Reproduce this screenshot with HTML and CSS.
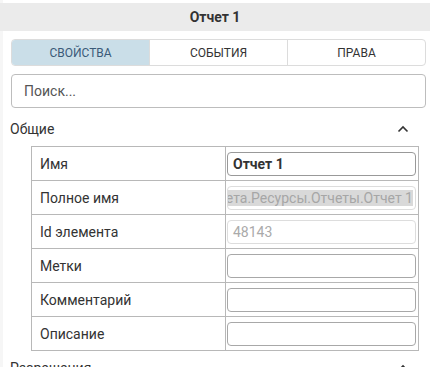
FILE: index.html
```html
<!DOCTYPE html>
<html lang="ru">
<head>
<meta charset="utf-8">
<link rel="stylesheet" href="styles.css">
</head>
<body>
<div class="page">
  <div class="header">Отчет 1</div>
  <div class="content">
    <div class="tabs">
      <div class="tab active">СВОЙСТВА</div>
      <div class="tab">СОБЫТИЯ</div>
      <div class="tab">ПРАВА</div>
    </div>
    <div class="search">Поиск...</div>
    <div class="section-head">
      <span>Общие</span>
      <svg class="chev" width="12" height="8" viewBox="0 0 12 8"><path d="M1.5 6.5 L6 2 L10.5 6.5" fill="none" stroke="#333" stroke-width="1.6"/></svg>
    </div>
    <div class="table">
      <div class="row">
        <div class="label">Имя</div>
        <div class="cell"><div class="input strong">Отчет 1</div></div>
      </div>
      <div class="row">
        <div class="label">Полное имя</div>
        <div class="cell"><div class="input disabled end"><span class="sel">Мета.Ресурсы.Отчеты.Отчет 1</span></div></div>
      </div>
      <div class="row">
        <div class="label">Id элемента</div>
        <div class="cell"><div class="input disabled">48143</div></div>
      </div>
      <div class="row">
        <div class="label">Метки</div>
        <div class="cell"><div class="input"></div></div>
      </div>
      <div class="row">
        <div class="label">Комментарий</div>
        <div class="cell"><div class="input"></div></div>
      </div>
      <div class="row">
        <div class="label">Описание</div>
        <div class="cell"><div class="input"></div></div>
      </div>
    </div>
    <div class="section-head next">
      <span>Разрешения</span>
      <svg class="chev" width="12" height="8" viewBox="0 0 12 8"><path d="M1.5 6.5 L6 2 L10.5 6.5" fill="none" stroke="#333" stroke-width="1.6"/></svg>
    </div>
  </div>
</div>
</body>
</html>
```

FILE: styles.css
```css
html, body {
  margin: 0;
  padding: 0;
  background: #fff;
}
body {
  font-family: Roboto, "Liberation Sans", sans-serif;
  color: #333;
  overflow: hidden;
  height: 367px;
}
.page {
  padding-top: 3px;
  border-left: 3px solid #f6f6f6;
  min-height: 364px;
}
.header {
  height: 28px;
  background: #ebebeb;
  display: flex;
  align-items: center;
  justify-content: center;
  font-weight: 700;
  font-size: 14px;
  color: #333;
  margin-left: -3px;
}
.content {
  padding: 8px 4px 0 8px;
}
.tabs {
  display: flex;
  height: 25px;
  border: 1px solid #dcdcdc;
  border-radius: 4px;
  overflow: hidden;
}
.tab {
  flex: 1;
  display: flex;
  align-items: center;
  justify-content: center;
  font-size: 12px;
  color: #333;
  border-left: 1px solid #dcdcdc;
}
.tab:first-child { border-left: none; }
.tab.active {
  background: #cadee8;
  color: #3b5a78;
}
.search {
  margin-top: 8px;
  height: 32px;
  border: 1px solid #bdbdbd;
  border-radius: 4px;
  display: flex;
  align-items: center;
  padding-left: 12px;
  font-size: 14px;
  color: #555;
}
.section-head {
  display: flex;
  justify-content: space-between;
  align-items: center;
  height: 26px;
  margin-top: 8px;
  margin-left: -1px;
  padding-right: 17px;
  font-size: 14px;
  color: #333;
}
.section-head.next {
  margin-top: 4px;
}
.table {
  margin: 4px 7px 0 20px;
  border: 1px solid #b8b8b8;
  border-bottom: none;
}
.row {
  display: flex;
  height: 33px;
  border-bottom: 1px solid #b8b8b8;
}
.label {
  width: 194px;
  flex: none;
  border-right: 1px solid #b8b8b8;
  display: flex;
  align-items: center;
  padding-left: 8px;
  box-sizing: border-box;
  font-size: 14px;
  color: #333;
}
.cell {
  flex: 1;
  display: flex;
  align-items: center;
  padding: 0 2px 0 1px;
  min-width: 0;
}
.input {
  flex: 1;
  height: 22px;
  border: 1px solid #a8a8a8;
  border-radius: 4px;
  display: flex;
  align-items: center;
  padding: 0 5px;
  font-size: 14px;
  color: #333;
  overflow: hidden;
  white-space: nowrap;
  min-width: 0;
}
.input.strong {
  font-weight: 700;
  border-color: #999;
}
.input.disabled {
  border-color: #ddd;
  color: #aaa;
}
.input.end {
  justify-content: flex-end;
  padding: 0 2px;
}
.sel {
  background: #d9d9d9;
  color: #a6a6a6;
  flex: none;
}
```
